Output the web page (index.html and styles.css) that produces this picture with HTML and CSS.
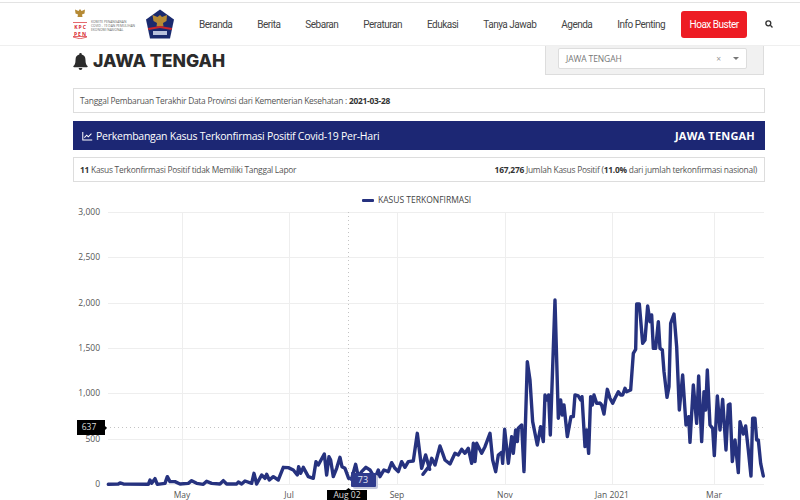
FILE: index.html
```html
<!DOCTYPE html>
<html lang="id">
<head>
<meta charset="utf-8">
<title>Jawa Tengah</title>
<link rel="stylesheet" href="styles.css">
</head>
<body>
<header class="topbar">
  <div class="logos">
    <div class="kpc">
      <svg class="kpc-mark" viewBox="0 0 16 30" width="16" height="30">
        <path class="gold" d="M8 0l1.500 2 3.500-1.500-.5 4-2.500 1 .5 2.500h-5l.5-2.500-2.500-1-.5-4 3.500 1.500z"/>
        <g class="red-line"><path d="M1 13.500h14M1 27.500h14M1 28l7 1.800 7-1.800"/></g>
        <text class="kpc-letters" x="8.500" y="19.500">KPC</text>
        <text class="kpc-letters" x="8.500" y="26.500">PEN</text>
      </svg>
      <div class="kpc-text"><span>KOMITE PENANGANAN</span><span>COVID - 19 DAN PEMULIHAN</span><span>EKONOMI NASIONAL</span></div>
    </div>
    <svg class="shield" viewBox="0 0 30 30" width="30" height="30">
      <path class="navy" d="M15 .5L29 10.500 25 29.500H5L1 10.500z"/>
      <path class="gold" d="M15 6l2 2 5-2-.5 6-3.500 2 .5 3.500h-7l.5-3.500-3.500-2L7.500 6l5 2z"/>
      <path class="red-band" d="M3 19l12-2 12 2-.5 2-11.500-2-11.500 2z"/>
      <rect class="white-box" x="8" y="22" width="14" height="4"/>
    </svg>
  </div>
  <nav class="menu">
    <a>Beranda</a><a>Berita</a><a>Sebaran</a><a>Peraturan</a><a>Edukasi</a><a>Tanya Jawab</a><a>Agenda</a><a>Info Penting</a>
    <a class="hoax">Hoax Buster</a>
  </nav>
  <svg class="search" viewBox="0 0 12 12" width="8" height="8"><circle cx="5" cy="5" r="3.700"/><path d="M8 8l3.200 3.200"/></svg>
</header>

<main class="page">
  <section class="title-row">
    <h1 class="title">
      <svg class="bell" viewBox="0 0 16 18" width="15" height="17"><path d="M8 0a1.300 1.300 0 0 1 1.300 1.500C12 2.100 13.300 4.300 13.300 7c0 4 1 5.500 2.200 6.800.400.500.100 1.200-.6 1.200H1.100c-.7 0-1-.7-.6-1.200C1.700 12.500 2.700 11 2.700 7c0-2.700 1.300-4.900 4-5.500A1.300 1.300 0 0 1 8 0zM6 16h4a2 2 0 0 1-4 0z"/></svg>
      JAWA TENGAH
    </h1>
    <div class="filter">
      <div class="select"><span>JAWA TENGAH</span><span class="clear">×</span><span class="caret"></span></div>
    </div>
  </section>

  <div class="info-box"><span>Tanggal Pembaruan Terakhir Data Provinsi dari Kementerian Kesehatan : <b>2021-03-28</b></span></div>

  <div class="banner">
    <span class="banner-title">
      <svg viewBox="0 0 14 12" width="11" height="10"><path d="M1 1v10h12M3 8l3-3 2 2 4-4"/></svg>
      Perkembangan Kasus Terkonfirmasi Positif Covid-19 Per-Hari
    </span>
    <b class="banner-region">JAWA TENGAH</b>
  </div>

  <div class="stat-box">
    <span><b>11</b> Kasus Terkonfirmasi Positif tidak Memiliki Tanggal Lapor</span>
    <span><b>167,276</b> Jumlah Kasus Positif (<b>11.0%</b> dari jumlah terkonfirmasi nasional)</span>
  </div>

  <svg class="chart" viewBox="73 190 692 310" width="692" height="310">
    <g class="grid">
      <path d="M108 212.500H764M108 257.500H764M108 303.500H764M108 348.500H764M108 393.500H764M108 439.500H764M108 484.500H764"/>
      <path d="M182.500 212V484M289.500 212V484M397.500 212V484M505.500 212V484M612.500 212V484M714.500 212V484"/>
    </g>
    <g class="ylabels">
      <text x="100" y="215">3,000</text>
      <text x="100" y="260">2,500</text>
      <text x="100" y="306">2,000</text>
      <text x="100" y="351">1,500</text>
      <text x="100" y="396">1,000</text>
      <text x="100" y="442">500</text>
      <text x="100" y="487">0</text>
    </g>
    <g class="xlabels">
      <text x="182" y="498">May</text>
      <text x="289" y="498">Jul</text>
      <text x="397" y="498">Sep</text>
      <text x="505" y="498">Nov</text>
      <text x="612" y="498">Jan 2021</text>
      <text x="714" y="498">Mar</text>
    </g>
    <path class="cross" d="M106 427.500H764M348.500 212V488"/>
    <g class="series">
      <polyline transform="translate(60 380) scale(.3333)" points="145,313 175,312 180,309 190,312 265,313 270,300 275,310 285,296 292,313 315,310 322,290 330,305 345,305 360,312 385,310 395,302 410,310 430,313 440,304 455,310 480,312 490,302 500,312 530,312 535,306 545,312 555,303 575,310 582,280 590,312 605,285 615,295 620,283 628,300 640,290 655,300 670,262 685,263 700,270 712,285 716,260 722,280 730,262 745,290 760,295 768,245 775,255 793,222 800,285 807,230 812,240 820,290 830,265 840,232 846,260 855,265 866,295 875,296 887,253 895,290 905,275 918,262 930,270 945,295 955,270 960,290 972,270 985,275 995,248 1005,265 1015,275 1025,245 1035,262 1045,245 1060,243 1072,160 1085,265 1097,225 1109,268"/>
      <polyline transform="translate(430 290) scale(.3333)" points="-21,553 0,525 5,505 15,525 30,468 38,490 45,510 60,522 75,490 85,495 95,478 105,490 115,475 125,520 130,460 135,515 140,460 155,490 165,470 180,430 188,510 197,545 205,495 215,487 218,520 224,418 235,520 245,440 250,490 257,420 262,455 265,415 275,405 282,545 292,215 300,270 308,395 322,465 332,410 340,455 345,315 352,330 356,315 361,435 375,30 385,385 392,330 397,375 402,345 412,440 423,380 430,380 435,315 445,318 452,330 456,320 465,470 470,420 476,490 482,320 487,345 492,315 500,340 510,340"/>
      <polyline transform="translate(600 290) scale(.3333)" points="0,340 5,345 12,372 22,298 30,325 38,340 45,325 55,305 62,315 68,315 75,295 80,305 92,300 100,190 107,178 110,42 118,42 128,160 135,150 143,48 150,95 155,75 160,175 167,175 175,95 180,175 187,180 192,245 201,322 207,290 212,100 222,72 230,170 238,360 248,255 258,405 266,380 270,457 280,285 290,400 296,258 305,455 312,305 317,360 322,240 330,405 338,415 343,497 352,318 360,420 368,328 378,480 385,345 390,342 397,515 405,450 415,548 420,395 430,432 437,408 445,480 453,558 458,385 465,385 470,450 475,450 482,520 490,558"/>
    </g>
    <g class="legend">
      <rect x="362" y="199" width="12" height="3" rx="1"/>
      <text x="378" y="203">KASUS TERKONFIRMASI</text>
    </g>
    <g class="tag-y">
      <path d="M77 420h28v6l2 2-2 2v5H77z"/>
      <text x="89" y="430">637</text>
    </g>
    <g class="tag-x">
      <path d="M327 490h19l2.500-2 2.500 2h16v10h-40z"/>
      <text x="347" y="498">Aug 02</text>
    </g>
    <g class="tag-pt">
      <rect class="tag-shadow" x="351" y="473" width="25" height="14" rx="2"/>
      <path d="M352 473h23a1 1 0 0 1 1 1v12a1 1 0 0 1-1 1h-23a1 1 0 0 1-1-1v-5l-3-2 3-2v-4a1 1 0 0 1 1-1z"/>
      <text x="363" y="483">73</text>
    </g>
  </svg>
</main>
</body>
</html>
```
FILE: styles.css
```css
* { box-sizing: border-box; }
html, body { margin: 0; height: 500px; overflow: hidden; background: #fff; }
body { font-family: "Open Sans", sans-serif; color: #555; }

.topbar {
  height: 44px;
  margin-top: 2px;
  border-top: 1px solid #e3e3e3;
  border-bottom: 1px solid #efefef;
  display: flex;
  align-items: center;
  padding-left: 72px;
  position: relative;
  z-index: 2;
  background: #fff;
}
.logos { display: flex; align-items: center; gap: 8px; width: 127px; flex: none; }
.kpc { display: flex; align-items: center; gap: 3px; flex: none; }
.kpc-text { display: flex; flex-direction: column; font: 3.300px/3.800px "Open Sans", sans-serif; color: #666; white-space: nowrap; width: 46px; padding-top: 4px; }
.kpc-letters { font: 700 5px "Open Sans", sans-serif; fill: #d8282f; text-anchor: middle; letter-spacing: 1px; }
.red-line path { stroke: #d8282f; stroke-width: .7; fill: none; }
.gold { fill: #b58a35; }
.navy { fill: #1a2a6e; }
.red-band { fill: #c9252b; }
.white-box { fill: #b9c2dc; }

.menu { display: flex; align-items: center; flex: none; font: 400 10px "Roboto", sans-serif; letter-spacing: -.5px; color: #444; }
.menu a { margin-right: 25px; white-space: nowrap; }
.menu a.hoax {
  background: #ed1c24;
  color: #fff;
  border-radius: 3px;
  height: 27px;
  width: 66px;
  display: flex;
  align-items: center;
  justify-content: center;
  margin: 0 0 0 -9px;
}
.search { margin-left: 18px; flex: none; }
.search circle, .search path { fill: none; stroke: #333; stroke-width: 2; }

.page { margin: 0 35px 0 73px; width: 692px; }
.title-row { display: flex; justify-content: space-between; height: 42px; }
.title { margin: 5px 0 0; font: 800 17.600px/20px "Inter", sans-serif; color: #2b2b2b; display: flex; align-items: center; gap: 5px; height: 20px; }
.bell { fill: #2b2b2b; }
.filter { width: 219px; height: 29px; margin-right: 1px; background: #f1f1f1; border: 1px solid #ddd; border-top: 0; padding: 2px 16px 0 12px; }
.select { height: 21px; background: #fff; border: 1px solid #ddd; border-radius: 2px; display: flex; align-items: center; padding: 0 7px; font-size: 8.500px; color: #777; letter-spacing: -.1px; }
.select span:first-child { flex: 1; }
.clear { margin-right: 12px; color: #999; }
.caret { width: 0; height: 0; border-left: 3px solid transparent; border-right: 3px solid transparent; border-top: 3px solid #777; }

.info-box, .stat-box { border: 1px solid #ddd; height: 25px; display: flex; align-items: center; padding: 0 7px 0 6px; font-size: 8.400px; letter-spacing: -.25px; color: #555; white-space: nowrap; }
.info-box b, .stat-box b { color: #333; font-weight: 700; }
.banner { height: 29px; margin-top: 8px; background: #1c2774; color: #fff; display: flex; justify-content: space-between; align-items: center; padding: 0 10px 0 9px; }
.banner-title { font-size: 10.500px; letter-spacing: -.25px; display: flex; align-items: center; gap: 3px; }
.banner-title svg path { fill: none; stroke: #fff; stroke-width: 1.300; }
.banner-region { font-size: 11px; font-weight: 700; letter-spacing: .2px; }
.stat-box { margin-top: 7px; justify-content: space-between; }
.stat-box span:last-child { letter-spacing: -.24px; }

.chart { display: block; margin-top: 8px; font-family: "Open Sans", sans-serif; }
.grid path { stroke: #eeeeee; stroke-width: 1; fill: none; }
.ylabels text { font-size: 8.500px; fill: #555; text-anchor: end; }
.xlabels text { font-size: 8.500px; fill: #555; text-anchor: middle; }
.cross { stroke: #c4c4c4; stroke-width: 1; stroke-dasharray: 1 3; fill: none; }
.series polyline { fill: none; stroke: #26327f; stroke-width: 3.400; stroke-linejoin: round; stroke-linecap: round; vector-effect: non-scaling-stroke; }
.legend rect { fill: #26327f; }
.legend text { font-size: 8.500px; fill: #444; }
.tag-y path, .tag-x path { fill: #000; }
.tag-y text, .tag-x text { font-size: 8.500px; fill: #ddd; text-anchor: middle; }
.tag-pt path { fill: #2f3b8c; }
.tag-shadow { fill: #c6c9de; transform: translate(2px, 2px); }
.tag-pt text { font-size: 9px; fill: #e4e6f4; text-anchor: middle; }
```
